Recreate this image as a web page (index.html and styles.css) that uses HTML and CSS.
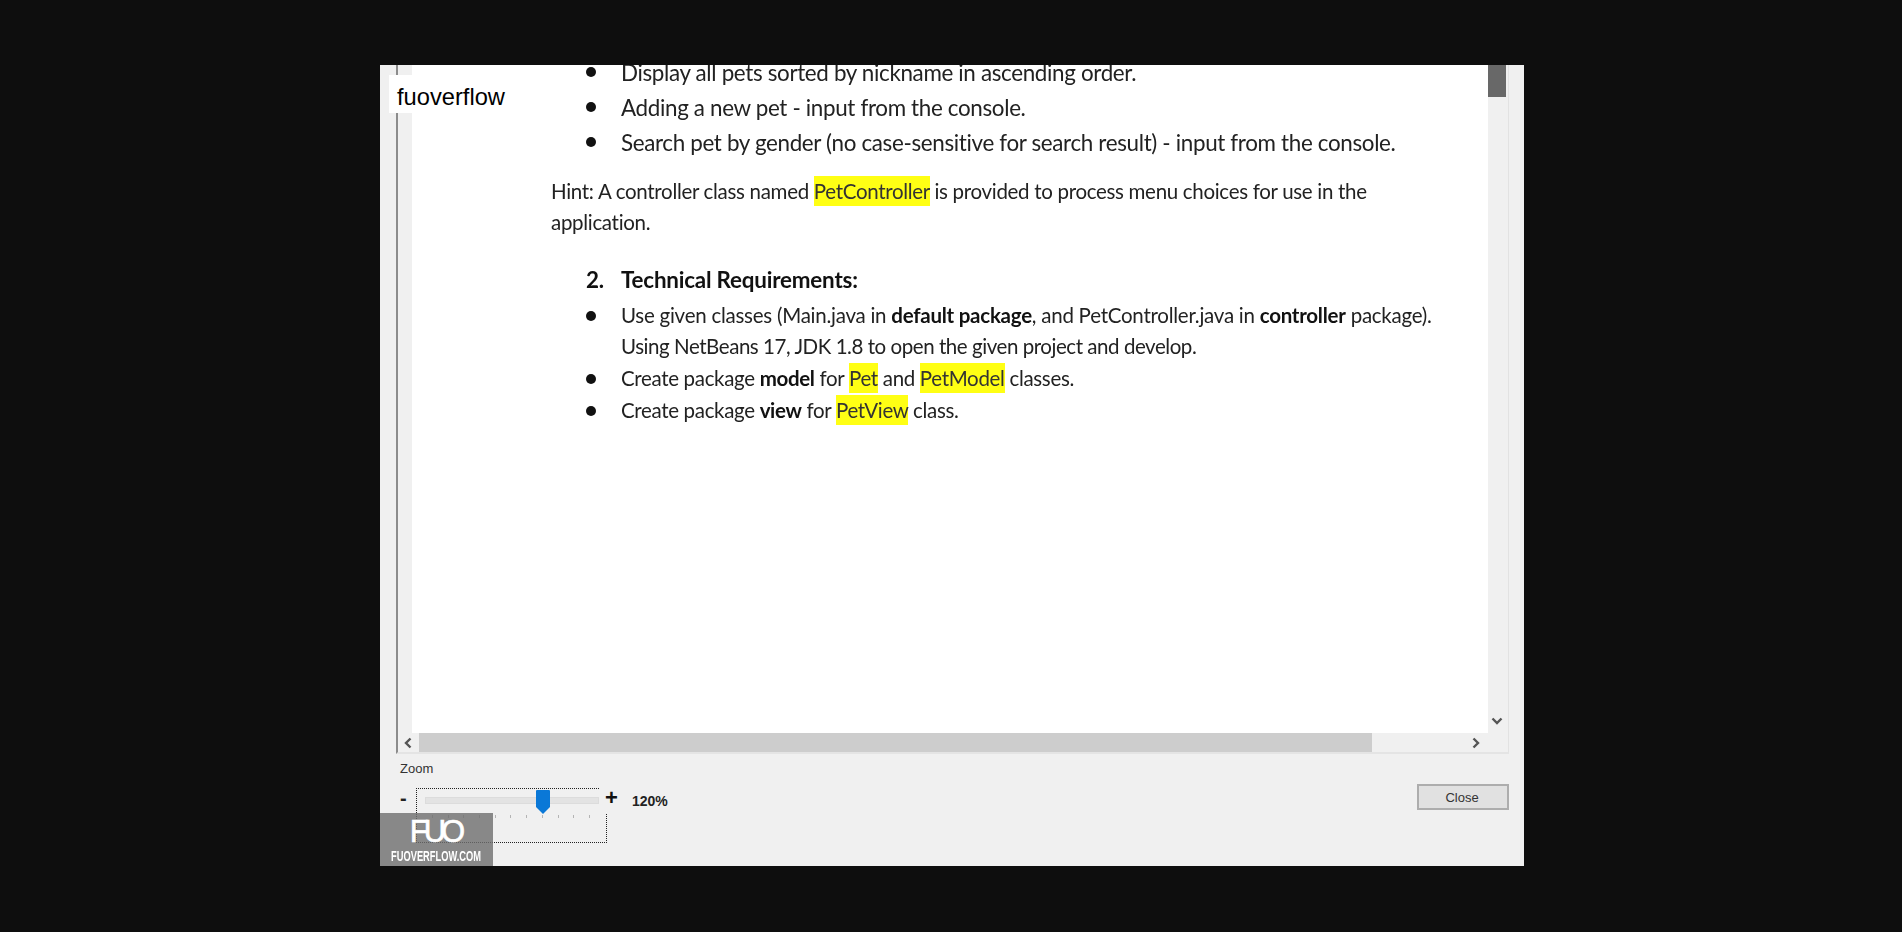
FILE: index.html
```html
<!DOCTYPE html>
<html lang="en">
<head>
  <meta charset="UTF-8">
  <title>Exam preview</title>
  <link rel="stylesheet" href="styles.css">
</head>
<body>
  <div class="dialog">
    <div class="viewer">
      <div class="viewer-main">
        <div class="gutter"></div>
        <div class="page">
          <ul class="list first-list">
            <li>Display all pets sorted by nickname in ascending order.</li>
            <li>Adding a new pet - input from the console.</li>
            <li>Search pet by gender (no case-sensitive for search result) - input from the console.</li>
          </ul>
          <p class="hint">Hint: A controller class named <mark>PetController</mark> is provided to process menu choices for use in the application.</p>
          <h2 class="section"><span class="section-num">2.</span>Technical Requirements:</h2>
          <ul class="list tech-list">
            <li>Use given classes (Main.java in <b>default package</b>, and PetController.java in <b>controller</b> package). <span class="tight">Using NetBeans 17, JDK 1.8 to open the given project and develop.</span></li>
            <li>Create package <b>model</b> for <mark>Pet</mark> and <mark>PetModel</mark> classes.</li>
            <li>Create package <b>view</b> for <mark>PetView</mark> class.</li>
          </ul>
        </div>
        <div class="vscroll">
          <div class="vthumb"></div>
          <svg class="arrow" width="12" height="8" viewBox="0 0 12 8"><path d="M1.5 1.5 6 6l4.5-4.5" fill="none" stroke="#555" stroke-width="2.4"/></svg>
        </div>
      </div>
      <div class="hscroll">
        <svg class="arrow" width="8" height="12" viewBox="0 0 8 12"><path d="M6.5 1.5 2 6l4.5 4.5" fill="none" stroke="#555" stroke-width="2.4"/></svg>
        <div class="hthumb"></div>
        <svg class="arrow" width="8" height="12" viewBox="0 0 8 12"><path d="M1.5 1.5 6 6l-4.5 4.5" fill="none" stroke="#555" stroke-width="2.4"/></svg>
      </div>
    </div>
    <div class="footer">
      <div class="zoom-box">
        <div class="zoom-label">Zoom</div>
        <div class="zoom-row">
          <span class="minus">-</span>
          <div class="slider">
            <div class="track"></div>
            <div class="thumb"></div>
            <div class="ticks">
              <i></i><i></i><i></i><i></i><i></i><i></i><i></i><i></i><i></i><i></i><i></i>
            </div>
          </div>
          <span class="plus">+</span>
          <span class="percent">120%</span>
        </div>
      </div>
      <button class="close-btn">Close</button>
    </div>
    <div class="brand-text">fuoverflow</div>
    <div class="brand-logo">
      <div class="logo-mark">FUO</div>
      <div class="logo-site">FUOVERFLOW.COM</div>
    </div>
  </div>
</body>
</html>
```

FILE: styles.css
```css
html, body {
  height: 100%;
}

body {
  margin: 0;
  padding: 65px 378px 66px 380px;
  box-sizing: border-box;
  background-color: #0e0e0e;
  font-family: "Liberation Sans", Arial, sans-serif;
}

.dialog {
  position: relative;
  height: 100%;
  background-color: #f0f0f0;
  padding-left: 16px;
  padding-right: 15px;
  overflow: hidden;
}

/* document viewer */
.viewer {
  height: 687px;
  display: flex;
  flex-direction: column;
  border-left: 2px solid #8c8c8c;
  border-right: 1px solid #e2e2e2;
  border-bottom: 2px solid #e4e4e4;
}

.viewer-main {
  flex: 1;
  display: flex;
  min-height: 0;
}

.gutter {
  width: 14px;
  background-color: #f0f0f0;
}

.page {
  flex: 1;
  background-color: #fff;
  overflow: hidden;
  padding-left: 139px;
  font-family: Lato, "Open Sans", sans-serif;
  font-size: 20.5px;
  letter-spacing: -0.31px;
  color: #222;
  filter: blur(0.35px);
}

.list {
  list-style: none;
  margin: 0;
  padding: 0 0 0 70px;
}

.list li {
  position: relative;
}

.list li::before {
  content: "";
  position: absolute;
  left: -35px;
  top: 12px;
  width: 10px;
  height: 10px;
  border-radius: 50%;
  background-color: #111;
}

.first-list {
  margin-top: -10px;
  line-height: 35px;
  font-size: 22.4px;
  letter-spacing: -0.34px;
}

.hint {
  margin: 16px 0 0;
  width: 860px;
  line-height: 31px;
}

mark {
  background-color: #ffff14;
  color: #333;
  padding: 3px 0;
}

.section {
  margin: 26px 0 0 35px;
  font-size: 22.4px;
  letter-spacing: -0.2px;
  line-height: 32px;
  color: #111;
}

.section-num {
  display: inline-block;
  width: 35px;
}

.tech-list {
  margin-top: 4px;
  line-height: 31px;
  letter-spacing: -0.25px;
  width: 850px;
}

.tech-list .tight {
  letter-spacing: -0.45px;
}

.tech-list li + li {
  margin-top: 1px;
  letter-spacing: -0.33px;
}

.tech-list b {
  color: #111;
}

.tech-list li::before {
  top: 11px;
}

.vscroll {
  width: 18px;
  background-color: #f0f0f0;
  display: flex;
  flex-direction: column;
  justify-content: space-between;
  align-items: center;
  padding-bottom: 8px;
  box-sizing: border-box;
  margin-right: 2px;
}

.vthumb {
  width: 100%;
  height: 32px;
  background-color: #686868;
}

.hscroll {
  height: 19px;
  display: flex;
  align-items: center;
  background-color: #f0f0f0;
}

.hscroll .arrow:first-child {
  margin: 0 7px 0 6px;
}

.hthumb {
  width: 953px;
  height: 19px;
  background-color: #cdcdcd;
  margin-right: 100px;
}

/* bottom bar */
.footer {
  display: flex;
  justify-content: space-between;
  align-items: flex-start;
}

.zoom-label {
  margin: 7px 0 0 4px;
  font-size: 13px;
  line-height: 16px;
  color: #333;
}

.zoom-row {
  display: flex;
  align-items: flex-start;
  margin-top: 11px;
}

.minus {
  width: 20px;
  margin-top: -2px;
  padding-left: 4px;
  box-sizing: border-box;
  font-size: 20px;
  font-weight: bold;
  line-height: 24px;
  color: #222;
}

.slider {
  position: relative;
  width: 191px;
  height: 55px;
  border: 1px dotted #222;
  box-sizing: border-box;
}

.track {
  position: absolute;
  left: 8px;
  top: 8px;
  width: 172px;
  height: 5px;
  background-color: #e3e3e3;
  border: 1px solid #dcdcdc;
}

.thumb {
  position: absolute;
  left: 119px;
  top: 1px;
  width: 14px;
  height: 17px;
  background-color: #0a78d7;
  border-radius: 1px 1px 0 0;
}

.thumb::after {
  content: "";
  position: absolute;
  left: 0;
  top: 17px;
  border-left: 7px solid transparent;
  border-right: 7px solid transparent;
  border-top: 7px solid #0a78d7;
}

.ticks {
  display: flex;
  justify-content: space-between;
  margin: 26px 16px 0 15px;
}

.ticks i {
  width: 1px;
  height: 3px;
  background-color: #b4b4b4;
}

/* its background hides the corner of the dotted focus box */
.plus {
  position: relative;
  margin-left: -7px;
  padding-left: 5px;
  width: 30px;
  height: 25px;
  box-sizing: border-box;
  background-color: #f0f0f0;
  font-size: 22px;
  font-weight: bold;
  line-height: 20px;
  color: #111;
}

.percent {
  margin-left: 2px;
  margin-top: 4px;
  font-size: 14px;
  font-weight: bold;
  line-height: 18px;
  color: #222;
}

.close-btn {
  margin-top: 30px;
  width: 92px;
  height: 26px;
  background-color: #e1e1e1;
  border: 2px solid #adadad;
  font-family: "Liberation Sans", Arial, sans-serif;
  font-size: 13px;
  color: #333;
  padding: 0 2px 0 0;
}

/* watermarks on top of the picture */
.brand-text {
  position: absolute;
  left: 9px;
  top: 10px;
  width: 125px;
  height: 38px;
  padding-left: 8px;
  box-sizing: border-box;
  background-color: #fff;
  font-size: 23.7px;
  line-height: 45px;
  color: #000;
}

.brand-logo {
  position: absolute;
  left: 0;
  bottom: 0;
  width: 113px;
  height: 53px;
  background-color: rgba(110, 110, 110, 0.8);
  color: #fff;
  text-align: center;
}

.logo-mark {
  font-size: 31px;
  line-height: 30px;
  margin-top: 4px;
  letter-spacing: -5px;
  padding-right: 3px;
  -webkit-text-stroke: 0.6px #fff;
}

.logo-site {
  width: 160px;
  margin: 1px 0 0 -24px;
  font-size: 15px;
  font-weight: bold;
  line-height: 15px;
  transform: scaleX(0.62);
  white-space: nowrap;
}
```
